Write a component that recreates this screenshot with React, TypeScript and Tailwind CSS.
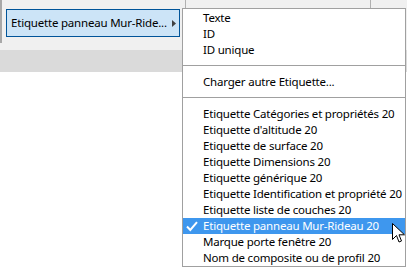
import React from "react";

const font = { fontFamily: '"Segoe UI", "Noto Sans", "Liberation Sans", sans-serif' };

function Item({ label, selected = false }: { label: string; selected?: boolean }) {
  return (
    <div
      className={
        "relative h-[16px] flex items-center pl-[20px] text-[11.5px] tracking-[-0.2px] leading-[16px] whitespace-nowrap " +
        (selected ? "bg-[#3e97ee] text-white" : "text-black")
      }
    >
      {selected && (
        <svg className="absolute left-[3px] top-[3px]" width="12" height="11" viewBox="0 0 12 11">
          <path d="M1 5.5 L4.3 9 L11 1.2" fill="none" stroke="#ffffff" strokeWidth="2" />
        </svg>
      )}
      {label}
    </div>
  );
}

export default function App() {
  const items = [
    "Etiquette Catégories et propriétés 20",
    "Etiquette d'altitude 20",
    "Etiquette de surface 20",
    "Etiquette Dimensions 20",
    "Etiquette générique 20",
    "Etiquette Identification et propriété 20",
    "Etiquette liste de couches 20",
    "Etiquette panneau Mur-Rideau 20",
    "Marque porte fenêtre 20",
    "Nom de composite ou de profil 20",
  ];
  return (
    <div className="relative w-[407px] h-[268px] overflow-hidden bg-white" style={font}>
      {/* toolbar */}
      <div className="h-[50px] bg-[#f0f0f0] flex">
        <div className="w-[2px] h-[43px] bg-[#a8a8a8]" />
        <div className="flex-1 flex flex-col">
          <div className="h-[9px] flex">
            <div className="w-[184px] border-r border-[#b0b0b0]" />
            <div className="w-[185px] border-r border-[#b0b0b0]" />
          </div>
          <div className="ml-[4px] w-[174px] h-[28px] bg-[#cce4f7] border border-[#005499] flex items-center pl-[4px] pr-[3px] text-[11.5px] tracking-[-0.2px] text-black">
            <span className="flex-1 whitespace-nowrap">Etiquette panneau Mur-Ride...</span>
            <svg width="4" height="7" viewBox="0 0 4 7" className="shrink-0">
              <path d="M0 0 L4 3.5 L0 7 Z" fill="#404040" />
            </svg>
          </div>
        </div>
      </div>
      <div className="h-[22px] bg-[#dadada]" />

      {/* menu */}
      <div className="absolute left-[182px] top-[8px] w-[224px] h-[259px] bg-white border border-[#a0a0a0] pt-[1px]">
        <Item label="Texte" />
        <Item label="ID" />
        <Item label="ID unique" />
        <div className="h-px bg-[#a0a0a0] mt-[7px] mb-[8px]" />
        <Item label="Charger autre Etiquette..." />
        <div className="h-px bg-[#a0a0a0] mt-[7px] mb-[8px]" />
        {items.map((l) => (
          <Item key={l} label={l} selected={l === "Etiquette panneau Mur-Rideau 20"} />
        ))}
      </div>

      {/* cursor */}
      <svg className="absolute left-[392px] top-[223px]" width="13" height="21" viewBox="0 0 13 21">
        <path
          d="M0.5 0.5 L0.5 16.5 L4.5 12.5 L7 19 L9.5 18 L7 11.8 L12.5 11.8 Z"
          fill="#ffffff"
          stroke="#000000"
          strokeWidth="1"
          strokeLinejoin="miter"
        />
      </svg>
    </div>
  );
}
